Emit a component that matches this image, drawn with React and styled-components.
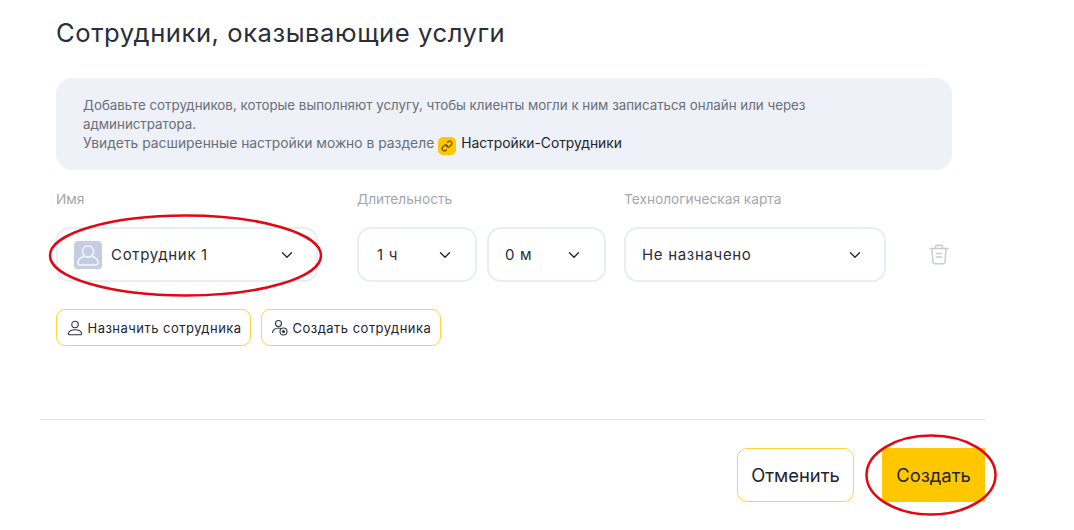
import React from 'react';
import styled, { createGlobalStyle } from 'styled-components';
import { ChevronDown } from 'lucide-react';

const Global = createGlobalStyle`
  html, body { margin: 0; padding: 0; background: #fff; }
  body { font-family: Inter, "Noto Sans", sans-serif; overflow: hidden; }
`;

const Page = styled.div`
  position: relative;
  width: 1074px;
  height: 530px;
  overflow: hidden;
  box-sizing: border-box;
  padding-top: 17px;
`;

const Body = styled.div`
  padding-left: 56px;
`;

const Title = styled.h1`
  margin: 0;
  font-size: 25.6px;
  line-height: 32px;
  font-weight: 400;
  letter-spacing: 0.55px;
  color: #2a2e38;
`;

const Info = styled.div`
  box-sizing: border-box;
  width: 896px;
  height: 92px;
  margin-top: 29px;
  padding: 18px 27px;
  border-radius: 16px;
  background: #eef1f7;
  font-size: 13.33px;
  line-height: 19px;
  color: #6a6f7b;
`;

const InfoHint = styled.span`
  font-size: 13.85px;
`;

const InfoLink = styled.span`
  color: #1f2430;
`;

const LinkBadge = styled.span`
  display: inline-flex;
  align-items: center;
  justify-content: center;
  width: 18px;
  height: 18px;
  margin: 0 5px 0 0;
  border-radius: 5px;
  background: #ffc700;
  vertical-align: -4px;
`;

const Fields = styled.div`
  display: flex;
  margin-top: 20px;
`;

const Field = styled.div`
  width: ${p => p.$width}px;
  margin-right: ${p => p.$after}px;
`;

const Label = styled.div`
  height: 18px;
  margin-bottom: 19px;
  font-size: 13.7px;
  line-height: 18px;
  color: #a3a7af;
  white-space: nowrap;
`;

const Pair = styled.div`
  display: flex;
  gap: 10px;
`;

const Select = styled.div`
  box-sizing: border-box;
  display: flex;
  align-items: center;
  width: ${p => p.$width}px;
  height: 55px;
  padding: 0 ${p => p.$right}px 0 ${p => p.$left}px;
  border: 2px solid #e9edf8;
  border-radius: 14px;
  background: #fff;
  font-size: 15px;
  color: #2a2e38;
`;

const SelectText = styled.span`
  flex: 1;
  white-space: nowrap;
  letter-spacing: 0.68px;
`;

const Avatar = styled.span`
  display: flex;
  align-items: center;
  justify-content: center;
  width: 28px;
  height: 28px;
  margin-right: 9px;
  border-radius: 4px;
  background: #c5cde3;
`;

const TrashSlot = styled.div`
  display: flex;
  align-items: center;
  height: 55px;
  margin-top: 37px;
  margin-left: 43px;
`;

const Actions = styled.div`
  display: flex;
  gap: 10px;
  margin-top: 27px;
`;

const Outline = styled.button`
  box-sizing: border-box;
  display: flex;
  align-items: center;
  gap: 5px;
  width: ${p => p.$width}px;
  height: 37px;
  padding: 0 0 0 ${p => p.$left}px;
  border: 1.5px solid #ffd23f;
  border-radius: 9px;
  background: #fff;
  font-family: inherit;
  font-size: 13px;
  letter-spacing: 0.48px;
  white-space: nowrap;
  color: #1f2430;
`;

const Footer = styled.div`
  box-sizing: border-box;
  display: flex;
  justify-content: flex-end;
  gap: 28px;
  width: 945px;
  margin: 73px 0 0 40px;
  padding-top: 28px;
  border-top: 1px solid #e2e3e8;
`;

const FooterButton = styled.button`
  box-sizing: border-box;
  height: 54px;
  width: ${p => p.$width}px;
  padding: 0;
  border: ${p => (p.$primary ? 'none' : '1px solid #ffd23f')};
  border-radius: ${p => (p.$primary ? '1px' : '10px')};
  background: ${p => (p.$primary ? '#ffc700' : '#fff')};
  font-family: inherit;
  font-size: 18.4px;
  color: #1f2430;
`;

const Annotation = styled.svg`
  position: absolute;
  left: 0;
  top: 0;
  pointer-events: none;
`;

const PersonIcon = () => (
  <svg width="24" height="24" viewBox="0 0 24 24" fill="none" stroke="#f4f6fb" strokeWidth="1.6">
    <circle cx="12" cy="8.5" r="5.6" />
    <path d="M8 13.5c-3.6 1-6 3.2-6 6.2 0 1.5 1 2.3 2.4 2.3h15.2c1.4 0 2.4-.8 2.4-2.3 0-3-2.4-5.2-6-6.2" />
  </svg>
);

const AssignIcon = () => (
  <svg width="16" height="16" viewBox="0 0 16 16" fill="none" stroke="#2f3440" strokeWidth="1.1">
    <circle cx="8" cy="4.500" r="3.200" />
    <path d="M2.600 14.700h10.800c.9 0 1.400-.6 1.200-1.400-.5-2.200-3.200-3.600-6.600-3.600s-6.100 1.400-6.600 3.600c-.2.800.3 1.400 1.200 1.400z" />
  </svg>
);

const CreateIcon = () => (
  <svg width="17" height="17" viewBox="0 0 17 17" fill="none" stroke="#2f3440" strokeWidth="1.1">
    <circle cx="7.500" cy="4.500" r="3" />
    <path d="M1.500 14c0-3 2.500-5 6-5 .9 0 1.700.1 2.400.4" />
    <circle cx="12.500" cy="12.500" r="3.500" />
    <circle cx="12.500" cy="12.500" r="1" fill="#2f3440" />
  </svg>
);

const TrashIcon = () => (
  <svg width="20" height="21" viewBox="0 0 20 21" fill="none" stroke="#c6cbd6" strokeWidth="1.5" strokeLinecap="round">
    <path d="M1 4.500h18" />
    <path d="M6.500 4.500V2.800c0-.9.600-1.500 1.500-1.500h4c.9 0 1.500.6 1.500 1.500v1.700" />
    <path d="M3 4.500l.9 13.500c.1 1 .8 1.700 1.800 1.700h8.600c1 0 1.700-.7 1.800-1.700L17 4.500" />
    <path d="M7.500 9.500h5M7.500 13h5" />
  </svg>
);

const LinkIcon = () => (
  <svg width="12" height="12" viewBox="0 0 12 12" fill="none" stroke="#4a3a00" strokeWidth="1.100" strokeLinecap="round">
    <path d="M6.500 2.300l.8-.8a2.300 2.300 0 0 1 3.200 3.200L8.800 6.400a2.300 2.300 0 0 1-3.200 0" />
    <path d="M5.500 9.700l-.8.8a2.300 2.300 0 0 1-3.200-3.200l1.700-1.700a2.300 2.300 0 0 1 3.200 0" />
  </svg>
);

const Chevron = () => <ChevronDown size={18} color="#1f2430" strokeWidth={1.8} />;

export default function App() {
  return (
    <Page>
      <Global />
      <Body>
        <Title>Сотрудники, оказывающие услуги</Title>
        <Info>
          Добавьте сотрудников, которые выполняют услугу, чтобы клиенты могли к ним записаться онлайн или через
          <br />
          администратора.
          <br />
          <InfoHint>
            Увидеть расширенные настройки можно в разделе{' '}
            <LinkBadge>
              <LinkIcon />
            </LinkBadge>
            <InfoLink>Настройки-Сотрудники</InfoLink>
          </InfoHint>
        </Info>
        <Fields>
          <Field $width={262} $after={39}>
            <Label>Имя</Label>
            <Select $width={262} $left={16} $right={20}>
              <Avatar>
                <PersonIcon />
              </Avatar>
              <SelectText>Сотрудник 1</SelectText>
              <Chevron />
            </Select>
          </Field>
          <Field $width={249} $after={18}>
            <Label>Длительность</Label>
            <Pair>
              <Select $width={120} $left={18} $right={21}>
                <SelectText>1 ч</SelectText>
                <Chevron />
              </Select>
              <Select $width={119} $left={16} $right={21}>
                <SelectText>0 м</SelectText>
                <Chevron />
              </Select>
            </Pair>
          </Field>
          <Field $width={262} $after={0}>
            <Label>Технологическая карта</Label>
            <Select $width={262} $left={16} $right={20}>
              <SelectText>Не назначено</SelectText>
              <Chevron />
            </Select>
          </Field>
          <TrashSlot>
            <TrashIcon />
          </TrashSlot>
        </Fields>
        <Actions>
          <Outline $width={195} $left={9.5}>
            <AssignIcon />
            Назначить сотрудника
          </Outline>
          <Outline $width={180} $left={8.5}>
            <CreateIcon />
            Создать сотрудника
          </Outline>
        </Actions>
      </Body>
      <Footer>
        <FooterButton $width={117}>Отменить</FooterButton>
        <FooterButton $width={103} $primary>
          Создать
        </FooterButton>
      </Footer>
      <Annotation width="1074" height="530" viewBox="0 0 1074 530" fill="none" stroke="#e30613" strokeWidth="2.5">
        <ellipse cx="185.500" cy="255.500" rx="135.500" ry="40" />
        <ellipse cx="931" cy="475" rx="64.500" ry="39.500" />
      </Annotation>
    </Page>
  );
}
